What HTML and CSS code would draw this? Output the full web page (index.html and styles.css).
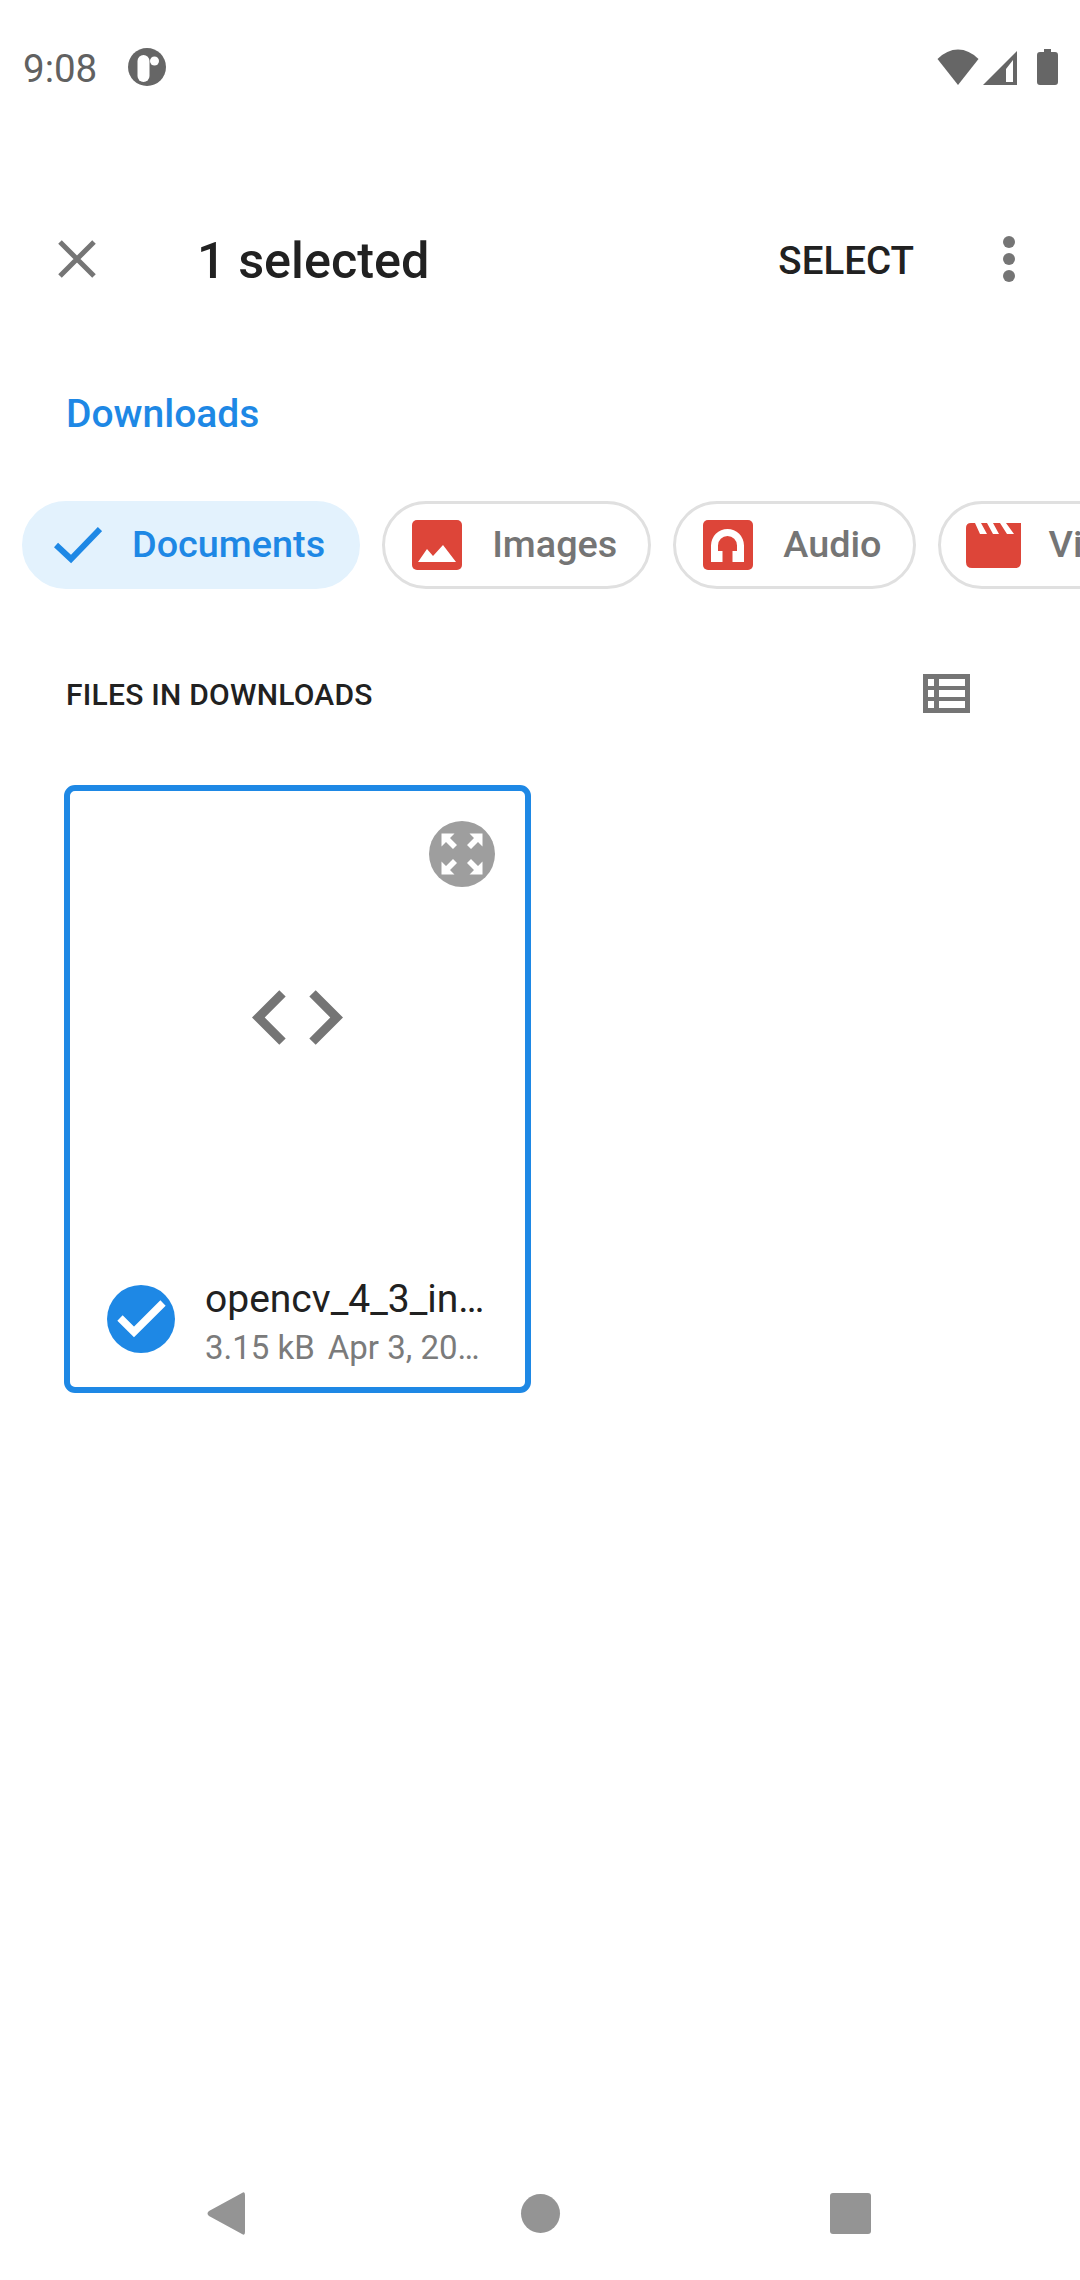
FILE: index.html
```html
<!doctype html>
<html lang="en">
 <head>
  <title>Downloads</title>
  <link rel="stylesheet" href="styles.css">
 </head>
 <body>
 <div id="screen">

  <div class="status">
   <span class="time">9:08</span>
   <svg class="pocket" width="38" height="38" viewBox="0 0 38 38">
    <circle cx="19" cy="19" r="19" fill="#666"/>
    <rect x="9.500" y="7" width="12" height="27" rx="6" fill="#fff"/>
    <circle cx="26.500" cy="13" r="4.500" fill="#fff"/>
   </svg>
   <div class="status-right">
    <svg width="42" height="36" viewBox="0 0 42 36"><path d="M21 36L0.500 10Q10 0.500 21 0.500T41.500 10Z" fill="#666"/></svg>
    <svg class="signal" width="34" height="34" viewBox="0 0 34 34"><path fill-rule="evenodd" d="M34 0V34H0ZM23 18V31H30V9Z" fill="#666"/></svg>
    <svg class="battery" width="21" height="36" viewBox="0 0 21 36"><path d="M7 0H14V3H18Q21 3 21 6V33Q21 36 18 36H3Q0 36 0 33V6Q0 3 3 3H7Z" fill="#666"/></svg>
   </div>
  </div>

  <div class="toolbar">
   <svg class="close" width="38" height="38" viewBox="0 0 38 38"><path d="M2 2L36 36M36 2L2 36" stroke="#757575" stroke-width="5" fill="none"/></svg>
   <h1>1 selected</h1>
   <span class="select">SELECT</span>
   <div class="dots"><i></i><i></i><i></i></div>
  </div>

  <div class="crumb">Downloads</div>

  <div class="chips">
   <div class="chip active">
    <svg width="48" height="38" viewBox="0 0 48 38"><path d="M2 19L17 33L46 3" stroke="#1e88e5" stroke-width="6" fill="none"/></svg>
    <span>Documents</span>
   </div>
   <div class="chip">
    <svg width="50" height="50" viewBox="0 0 50 50"><rect width="50" height="50" rx="5" fill="#dd4539"/><path d="M6 42L15 29L21 36L31 25L44 42Z" fill="#fff"/></svg>
    <span>Images</span>
   </div>
   <div class="chip">
    <svg width="50" height="50" viewBox="0 0 50 50"><rect width="50" height="50" rx="5" fill="#dd4539"/><path d="M8 42V25.500a16.500 16.500 0 0 1 33 0V42H29.500V31H34V25.500a9.500 9.500 0 0 0-19 0V31H19.500V42Z" fill="#fff"/></svg>
    <span>Audio</span>
   </div>
   <div class="chip video">
    <svg width="55" height="45" viewBox="0 0 55 45">
     <path d="M5 0H55V39Q55 45 49 45H6Q0 45 0 39V5Q0 0 5 0Z" fill="#dd4539"/>
     <path d="M9 0H15L21 11H14ZM21 0H27L33 11H27ZM34 0H40L48 11H41Z" fill="#fff"/>
    </svg>
    <span>Videos</span>
   </div>
  </div>

  <div class="section">
   <span>FILES IN DOWNLOADS</span>
   <svg width="47" height="39" viewBox="0 0 47 39"><path fill-rule="evenodd" d="M0 0H47V39H0ZM5 5V12H11V5ZM16 5V12H42V5ZM5 16V23H11V16ZM16 16V23H42V16ZM5 27V34H11V27ZM16 27V34H42V27Z" fill="#757575"/></svg>
  </div>

  <div class="card">
   <div class="expand">
    <svg width="66" height="66" viewBox="0 0 66 66">
     <path d="M12.500 12.500H25.500L21 17L28 24L24 28L17 21L12.500 25.500ZM53.500 12.500H40.500L45 17L38 24L42 28L49 21L53.500 25.500ZM12.500 53.500H25.500L21 49L28 42L24 38L17 45L12.500 40.500ZM53.500 53.500H40.500L45 49L38 42L42 38L49 45L53.500 40.500Z" fill="#fff"/>
    </svg>
   </div>
   <div class="preview">
    <svg width="91" height="55" viewBox="2 6 20 12"><path d="M9.400 16.600L4.800 12l4.600-4.600L8 6l-6 6 6 6 1.400-1.400zm5.200 0l4.600-4.600-4.600-4.600L16 6l6 6-6 6-1.400-1.400z" fill="#757575"/></svg>
   </div>
   <div class="file">
    <svg class="check" width="68" height="68" viewBox="0 0 68 68"><circle cx="34" cy="34" r="34" fill="#1e88e5"/><path d="M13 33L27 47L56 18" stroke="#fff" stroke-width="7.500" fill="none"/></svg>
    <div class="file-text">
     <div class="file-name">opencv_4_3_in…</div>
     <div class="file-meta"><span>3.15 kB</span><span>Apr 3, 20…</span></div>
    </div>
   </div>
  </div>

  <div class="nav">
   <svg width="39" height="45" viewBox="0 0 39 45"><path d="M36 2L3 20Q0 22.500 3 25L36 43Q39 45 39 41V4Q39 0 36 2Z" fill="#949494"/></svg>
   <div class="home"></div>
   <div class="recent"></div>
  </div>

 </div>
 </body>
</html>
```

FILE: styles.css
```css
* {
  box-sizing: border-box;
}

body {
  margin: 0;
  background: #fff;
  font-family: Roboto, sans-serif;
}

#screen {
  width: 1080px;
  height: 2280px;
  overflow: hidden;
  display: flex;
  flex-direction: column;
}

.status {
  height: 182px;
  padding: 48px 22px 0 23px;
  display: flex;
  align-items: flex-start;
}

.time {
  font-size: 38.5px;
  line-height: 42px;
  color: #616161;
  margin-right: 32px;
  width: 73px;
}

.status-right {
  margin-left: auto;
  display: flex;
  align-items: flex-start;
  padding-top: 1px;
}

.signal {
  margin-left: 4px;
  margin-top: 2px;
}

.battery {
  margin-left: 20px;
}

.toolbar {
  height: 154px;
  padding-left: 58px;
  display: flex;
  align-items: center;
}

h1 {
  margin: 2px 0 0 101px;
  font-size: 50.4px;
  font-weight: 500;
  color: #212121;
}

.select {
  margin: 2px 0 0 auto;
  font-size: 38.5px;
  font-weight: 500;
  color: #212121;
}

.dots {
  margin: 0 65px 0 89px;
  display: flex;
  flex-direction: column;
  gap: 5px;
}

.dots i {
  width: 12px;
  height: 12px;
  border-radius: 50%;
  background: #757575;
}

.crumb {
  height: 154px;
  padding: 2px 0 0 66px;
  display: flex;
  align-items: center;
  font-size: 39px;
  font-weight: 500;
  color: #1e88e5;
}

.chips {
  margin-top: 11px;
  padding-left: 22px;
  display: flex;
  gap: 22px;
}

.chip {
  flex-shrink: 0;
  height: 88px;
  padding: 0 31px 0 27px;
  border: 3px solid #e0e0e0;
  border-radius: 44px;
  display: flex;
  align-items: center;
  gap: 30px;
  font-size: 37.8px;
  font-weight: 500;
  color: #757575;
}

.chip span {
  margin-top: -2px;
}

.chip.active {
  background: #e3f2fd;
  border-color: #e3f2fd;
  color: #1e88e5;
  padding: 0 32px 0 29px;
}

.chip.video {
  padding-left: 25px;
  gap: 28px;
}

.section {
  height: 98px;
  margin-top: 55px;
  padding: 0 110px 0 66px;
  display: flex;
  align-items: center;
  justify-content: space-between;
  font-size: 30px;
  font-weight: 500;
  letter-spacing: 0.25px;
  color: #212121;
}

.section span {
  margin-top: 2px;
}

.card {
  position: relative;
  width: 467px;
  height: 608px;
  margin: 43px 0 0 64px;
  border: 6px solid #1e88e5;
  border-radius: 11px;
  display: flex;
  flex-direction: column;
}

.expand {
  position: absolute;
  top: 30px;
  right: 30px;
  width: 66px;
  height: 66px;
  border-radius: 50%;
  background: #9e9e9e;
}

.expand svg {
  display: block;
}

.preview {
  flex: 1;
  padding-bottom: 1px;
  display: flex;
  align-items: center;
  justify-content: center;
}

.file {
  height: 142px;
  padding: 0 0 0 37px;
  display: flex;
  align-items: center;
}

.check {
  flex-shrink: 0;
  margin-top: 6px;
}

.file-text {
  margin: 13px 0 0 30px;
}

.file-name {
  font-size: 39px;
  color: #212121;
  line-height: 46px;
}

.file-meta {
  margin-top: 4px;
  font-size: 33px;
  color: #7b7b7b;
  line-height: 44px;
  display: flex;
  gap: 13px;
}

.nav {
  margin-top: auto;
  height: 90px;
  margin-bottom: 22px;
  padding-left: 206px;
  display: flex;
  align-items: center;
}

.home {
  width: 39px;
  height: 39px;
  margin-left: 276px;
  border-radius: 50%;
  background: #949494;
}

.recent {
  width: 41px;
  height: 41px;
  margin-left: 270px;
  border-radius: 3px;
  background: #949494;
}
```
